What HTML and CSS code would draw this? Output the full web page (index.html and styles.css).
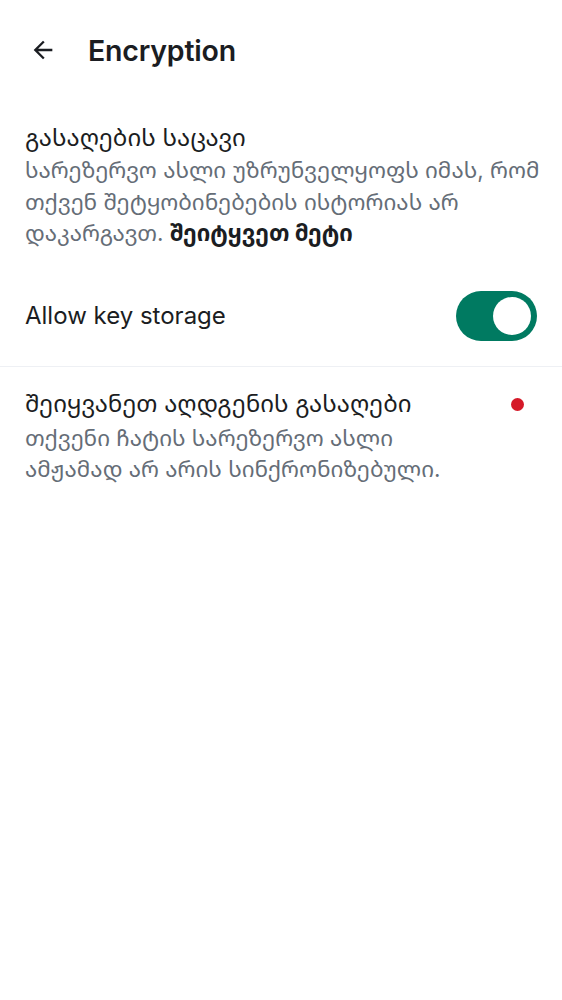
FILE: index.html
```html
<!DOCTYPE html>
<html>
<head>
<meta charset="utf-8">
<link rel="stylesheet" href="styles.css">
</head>
<body>
<div class="app">
  <header class="topbar">
    <svg class="back" width="28" height="28" viewBox="0 0 24 24"><path d="M20 11H7.83l5.59-5.59L12 4l-8 8 8 8 1.41-1.41L7.83 13H20v-2z" fill="#1b1d22"/></svg>
    <h1 class="title">Encryption</h1>
  </header>
  <section class="block">
    <div class="block-title">გასაღების საცავი</div>
    <div class="block-desc">სარეზერვო ასლი უზრუნველყოფს იმას, რომ თქვენ შეტყობინებების ისტორიას არ დაკარგავთ. <b class="link">შეიტყვეთ მეტი</b></div>
  </section>
  <div class="row toggle-row">
    <span class="row-label">Allow key storage</span>
    <span class="switch"><span class="knob"></span></span>
  </div>
  <div class="divider"></div>
  <div class="row item">
    <div class="item-text">
      <div class="block-title">შეიყვანეთ აღდგენის გასაღები</div>
      <div class="block-desc item-desc">თქვენი ჩატის სარეზერვო ასლი ამჟამად არ არის სინქრონიზებული.</div>
    </div>
    <span class="dot"></span>
  </div>
</div>
</body>
</html>
```
FILE: styles.css
```css
html, body { margin: 0; padding: 0; background: #fff; }
body { font-family: Inter, "Noto Sans Georgian", "DejaVu Sans", sans-serif; color: #1b1d22; }
.app { width: 562px; }
.topbar { display: flex; align-items: center; height: 100px; padding-left: 29px; gap: 31px; }
.back { flex: none; }
.title { margin: 0; font-size: 28.5px; font-weight: 600; letter-spacing: -0.2px; }
.block { padding: 22px 18px 0 25px; }
.block-title { font-size: 24px; line-height: 32px; color: #1b1d22; }
.block-desc { font-size: 22.4px; line-height: 31.5px; color: #656d77; }
.item-desc { margin-top: 2px; }
.link { color: #1b1d22; font-weight: 700; }
.row { display: flex; align-items: center; padding: 0 25px; }
.toggle-row { justify-content: space-between; height: 100px; margin-top: 17px; }
.row-label { font-size: 24px; }
.switch { width: 81px; height: 50px; border-radius: 25px; background: #007a61; display: flex; align-items: center; justify-content: flex-end; padding-right: 6px; box-sizing: border-box; }
.knob { width: 38px; height: 38px; border-radius: 50%; background: #fff; }
.divider { height: 1px; background: #eef0f4; }
.item { align-items: flex-start; padding-top: 21px; }
.item-text { flex: 1; padding-right: 40px; }
.dot { width: 13px; height: 13px; border-radius: 50%; background: #d51928; margin: 10px 13px 0 0; flex: none; }
```
